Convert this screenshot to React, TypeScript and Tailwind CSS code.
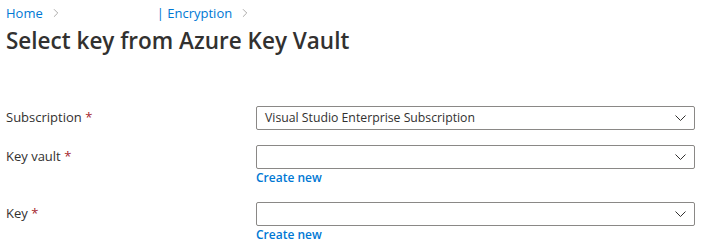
import { ChevronRight } from "lucide-react";

const font = { fontFamily: '"Open Sans", "Noto Sans", sans-serif' };

function Caret() {
  return (
    <svg width="11" height="6" viewBox="0 0 11 6" fill="none" className="shrink-0">
      <polyline points="0.5,0.5 5.5,5.5 10.5,0.5" stroke="#323130" strokeWidth="1" />
    </svg>
  );
}

function Field({ label, value, createNew }: { label: string; value?: string; createNew?: boolean }) {
  return (
    <div className="flex items-start">
      <div className="w-[250px] shrink-0 pt-[2px] text-[13px] text-[#323130]">
        {label} <span className="text-[#a4262c]">*</span>
      </div>
      <div className="w-[439px]">
        <div className="flex h-[24px] items-center justify-between rounded-[2px] border border-[#8a8886] bg-white pl-[8px] pr-[8px] text-[12.25px] text-[#323130]">
          <span>{value}</span>
          <Caret />
        </div>
        {createNew && (
          <div className="text-[12px] font-semibold leading-[18px] text-[#0078d4]">Create new</div>
        )}
      </div>
    </div>
  );
}

export default function App() {
  return (
    <div className="h-[251px] w-[705px] bg-white pl-[6px] pt-[4px]" style={font}>
      <div className="flex items-center text-[13px] leading-[18px] text-[#0078d4]">
        <span>Home</span>
        <ChevronRight size={14} strokeWidth={1.2} className="ml-[6px] text-[#8a8886]" />
        <span className="ml-[94px]">| Encryption</span>
        <ChevronRight size={14} strokeWidth={1.2} className="ml-[6px] text-[#8a8886]" />
      </div>
      <h1 className="mt-[4px] text-[22.5px] font-semibold leading-[30px] text-[#323130]">
        Select key from Azure Key Vault
      </h1>
      <div className="mt-[50px] flex flex-col">
        <Field label="Subscription" value="Visual Studio Enterprise Subscription" />
        <div className="mt-[15px]">
          <Field label="Key vault" createNew />
        </div>
        <div className="mt-[15px]">
          <Field label="Key" createNew />
        </div>
      </div>
    </div>
  );
}
